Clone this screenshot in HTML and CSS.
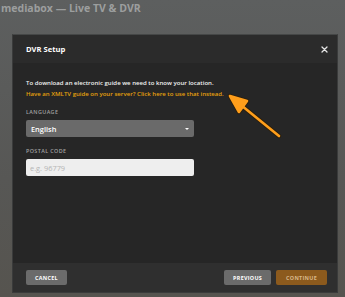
FILE: index.html
```html
<!DOCTYPE html>
<html lang="en">
<head>
    <meta charset="UTF-8">
    <meta name="viewport" content="width=device-width, initial-scale=1.0">
    <title>mediabox — Live TV &amp; DVR</title>
    <link rel="stylesheet" href="styles.css">
</head>
<body>
    <h1 class="page-title">mediabox — Live TV &amp; DVR</h1>

    <div class="modal">
        <div class="modal-header">
            <span class="modal-title">DVR Setup</span>
            <svg class="close-icon" width="7" height="7" viewBox="0 0 7 7">
                <path d="M1 1 L6 6 M6 1 L1 6" stroke="#e6e6e6" stroke-width="1.3" stroke-linecap="round"/>
            </svg>
        </div>

        <div class="modal-body">
            <p class="intro">To download an electronic guide we need to know your location.</p>
            <a class="xmltv-link" href="#">Have an XMLTV guide on your server? Click here to use that instead.</a>

            <label class="field-label">Language</label>
            <div class="select-box">
                <span>English</span>
                <span class="caret"></span>
            </div>

            <label class="field-label">Postal Code</label>
            <input class="text-input" type="text" placeholder="e.g. 96779">
        </div>

        <div class="modal-footer">
            <button class="btn">Cancel</button>
            <div class="footer-right">
                <button class="btn">Previous</button>
                <button class="btn btn-primary">Continue</button>
            </div>
        </div>

        <!-- annotation arrow pointing at the link -->
        <svg class="arrow" width="60" height="50" viewBox="0 0 60 50">
            <g stroke="#2a1e0c" stroke-width="4.4" stroke-linecap="round" stroke-linejoin="round" fill="#2a1e0c">
                <line x1="55" y1="43" x2="12" y2="8"/>
                <polygon points="6,3 23,8 15,19"/>
            </g>
            <g stroke="#ff9e1b" stroke-width="2.6" stroke-linecap="round" stroke-linejoin="round" fill="#ff9e1b">
                <line x1="55" y1="43" x2="12" y2="8"/>
                <polygon points="6,3 23,8 15,19"/>
            </g>
        </svg>
    </div>
</body>
</html>
```

FILE: styles.css
```css
body {
    margin: 0;
    padding: 0;
    width: 345px;
    height: 297px;
    overflow: hidden;
    background: linear-gradient(to bottom, #5d5f5f, #575755 60%, #56544f);
    font-family: 'Open Sans', 'Liberation Sans', sans-serif;
}

.page-title {
    margin: 0;
    padding: 1px 0 0 1px;
    height: 34px;
    box-sizing: border-box;
    font-size: 10.5px;
    font-weight: 700;
    color: #9c9e9e;
    line-height: 14px;
}

.modal {
    position: relative;
    margin-left: 12px;
    width: 324px;
    border: 1px solid #3a3b3b;
    border-top-color: #454747;
    background: #262626;
}

.modal-header {
    display: flex;
    justify-content: space-between;
    align-items: center;
    height: 28px;
    padding: 0 9px 0 13px;
    background: #2b2b2b;
}

.modal-title {
    font-size: 7.6px;
    font-weight: 700;
    color: #fff;
}

.modal-body {
    height: 200px;
    box-sizing: border-box;
    padding: 15px 13px;
    display: flex;
    flex-direction: column;
    align-items: flex-start;
}

.intro {
    margin: 0;
    font-size: 6.05px;
    font-weight: 600;
    line-height: 11px;
    color: #f2f2f2;
}

.xmltv-link {
    font-size: 6.05px;
    font-weight: 600;
    line-height: 11px;
    color: #e5a00d;
    text-decoration: none;
}

.field-label {
    margin-top: 8px;
    margin-bottom: 4px;
    font-size: 5.4px;
    font-weight: 600;
    letter-spacing: 0.4px;
    text-transform: uppercase;
    color: #a0a0a0;
}

.select-box {
    display: flex;
    justify-content: space-between;
    align-items: center;
    width: 168px;
    height: 17px;
    box-sizing: border-box;
    padding: 0 5px;
    margin-bottom: 2px;
    background: #6a6a6a;
    border-radius: 2px;
    font-size: 7.4px;
    font-weight: 600;
    color: #fff;
}

.caret {
    width: 0;
    height: 0;
    border-left: 2px solid transparent;
    border-right: 2px solid transparent;
    border-top: 2px solid #fff;
}

.text-input {
    width: 168px;
    height: 17px;
    box-sizing: border-box;
    margin: 0;
    padding: 0 4px;
    border: none;
    border-radius: 2px;
    background: #eeeeee;
    font-family: 'Open Sans', 'Liberation Sans', sans-serif;
    font-size: 7.4px;
    outline: none;
}

.text-input::placeholder {
    color: #b5b5b5;
}

.modal-footer {
    display: flex;
    justify-content: space-between;
    align-items: center;
    height: 29px;
    padding: 0 10px 0 13px;
    background: #2f2f2f;
}

.footer-right {
    display: flex;
    gap: 5px;
}

.btn {
    height: 15px;
    padding: 0 9px;
    border: none;
    border-radius: 2px;
    background: #6b6b6b;
    color: #fff;
    font-family: 'Open Sans', 'Liberation Sans', sans-serif;
    font-size: 5.4px;
    font-weight: 700;
    letter-spacing: 0.3px;
    text-transform: uppercase;
}

.btn-primary {
    padding: 0 10px;
    background: #8c5a1d;
    color: #d8b88a;
}

.arrow {
    position: absolute;
    left: 211px;
    top: 58px;
}
```
